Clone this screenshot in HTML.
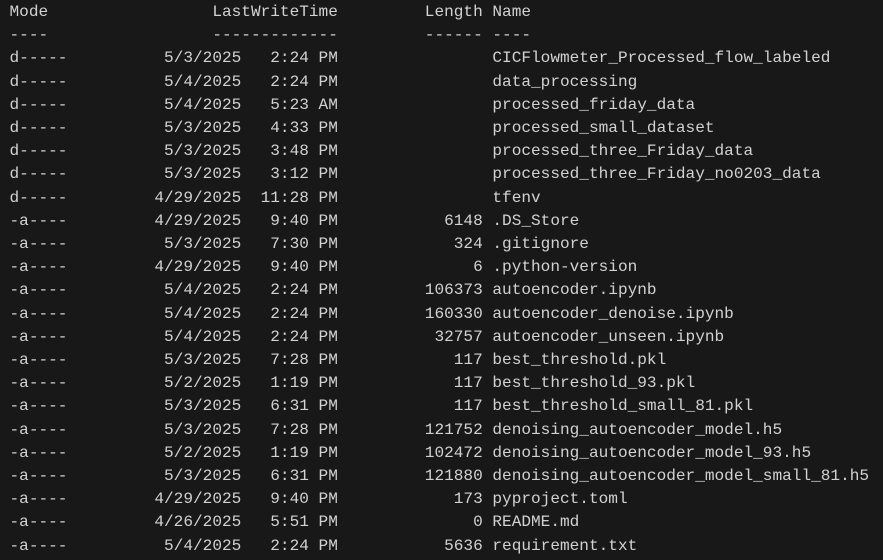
<!DOCTYPE html>
<html><head><meta charset="utf-8"><style>
html,body{margin:0;padding:0;background:#181818;width:883px;height:560px;overflow:hidden}
pre{margin:0;position:absolute;left:9.5px;top:1px;font-family:"Liberation Mono",monospace;font-size:16.1px;line-height:23.2px;color:#d2d2d2;white-space:pre}
</style></head><body>
<pre>Mode                 LastWriteTime         Length Name
----                 -------------         ------ ----
d-----          5/3/2025   2:24 PM                CICFlowmeter_Processed_flow_labeled
d-----          5/4/2025   2:24 PM                data_processing
d-----          5/4/2025   5:23 AM                processed_friday_data
d-----          5/3/2025   4:33 PM                processed_small_dataset
d-----          5/3/2025   3:48 PM                processed_three_Friday_data
d-----          5/3/2025   3:12 PM                processed_three_Friday_no0203_data
d-----         4/29/2025  11:28 PM                tfenv
-a----         4/29/2025   9:40 PM           6148 .DS_Store
-a----          5/3/2025   7:30 PM            324 .gitignore
-a----         4/29/2025   9:40 PM              6 .python-version
-a----          5/4/2025   2:24 PM         106373 autoencoder.ipynb
-a----          5/4/2025   2:24 PM         160330 autoencoder_denoise.ipynb
-a----          5/4/2025   2:24 PM          32757 autoencoder_unseen.ipynb
-a----          5/3/2025   7:28 PM            117 best_threshold.pkl
-a----          5/2/2025   1:19 PM            117 best_threshold_93.pkl
-a----          5/3/2025   6:31 PM            117 best_threshold_small_81.pkl
-a----          5/3/2025   7:28 PM         121752 denoising_autoencoder_model.h5
-a----          5/2/2025   1:19 PM         102472 denoising_autoencoder_model_93.h5
-a----          5/3/2025   6:31 PM         121880 denoising_autoencoder_model_small_81.h5
-a----         4/29/2025   9:40 PM            173 pyproject.toml
-a----         4/26/2025   5:51 PM              0 README.md
-a----          5/4/2025   2:24 PM           5636 requirement.txt</pre>
</body></html>
